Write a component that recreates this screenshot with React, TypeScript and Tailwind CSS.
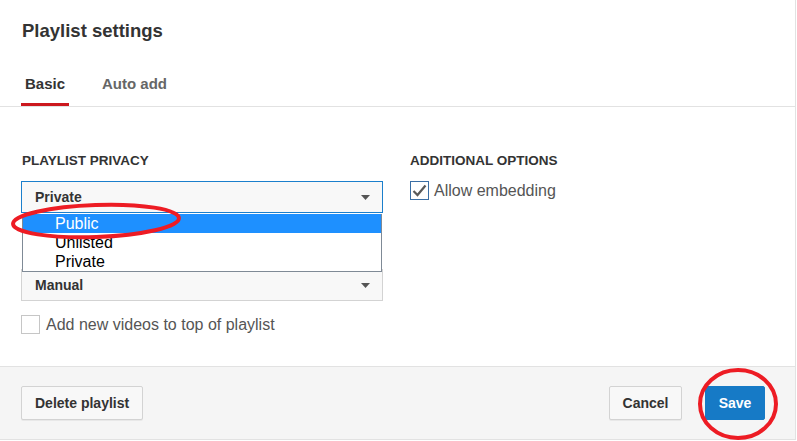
import React from "react";

function Arrow() {
  return (
    <svg width="9" height="5" viewBox="0 0 9 5" className="shrink-0">
      <path d="M0 0h9L4.5 5z" fill="#555555" />
    </svg>
  );
}

function SelectBox({ value, focused }: { value: string; focused?: boolean }) {
  return (
    <div
      className={`flex h-[32px] items-center justify-between bg-[#f8f8f8] pl-[13px] pr-[12px] text-[14px] font-bold text-[#333] ${
        focused ? "border border-[#1b7fcc]" : "border border-[#d3d3d3]"
      }`}
    >
      <span>{value}</span>
      <Arrow />
    </div>
  );
}

function Checkbox({ checked }: { checked?: boolean }) {
  return (
    <div
      className={`flex h-[19px] w-[19px] shrink-0 items-center justify-center bg-white ${
        checked ? "border border-[#3a6ea5]" : "border border-[#c6c6c6]"
      }`}
    >
      {checked && (
        <svg width="15" height="13" viewBox="0 0 15 13">
          <path d="M1.5 7l4 4L13.5 1.5" fill="none" stroke="#5a5a5a" strokeWidth="2.2" />
        </svg>
      )}
    </div>
  );
}

export default function App() {
  return (
    <div
      className="relative h-[441px] w-[797px] overflow-hidden bg-white"
      style={{ fontFamily: '"Liberation Sans", Arial, sans-serif' }}
    >
      <div className="flex h-[440px] w-[796px] flex-col border-r border-[#e2e2e2]">
        {/* header */}
        <div className="border-b border-[#e2e2e2]">
          <h1 className="px-[22px] pt-[20px] text-[18.5px] font-bold leading-[22px] text-[#333]">
            Playlist settings
          </h1>
          <div className="mt-[33px] flex gap-[29px] pl-[21px]">
            <div className="border-b-[3px] border-[#cc181e] px-[4px] pb-[10px] text-[15px] font-bold leading-[18px] text-[#333]">
              Basic
            </div>
            <div className="px-[4px] pb-[10px] text-[15px] font-bold leading-[18px] text-[#666]">
              Auto add
            </div>
          </div>
        </div>

        {/* body */}
        <div className="flex flex-1 gap-[27px] pl-[21px] pt-[46px]">
          <div className="relative w-[362px]">
            <div className="pl-[1px] text-[13.5px] font-bold leading-[16px] text-[#333]">
              PLAYLIST PRIVACY
            </div>
            <div className="mt-[12px]">
              <SelectBox value="Private" focused />
            </div>
            {/* ordering label sits under the open list */}
            <div className="mt-[21px] h-[16px]" />
            <div className="mt-[19px]">
              <SelectBox value="Manual" />
            </div>
            <div className="mt-[14px] flex items-center gap-[6px]">
              <Checkbox />
              <span className="text-[16px] leading-[19px] text-[#555]">
                Add new videos to top of playlist
              </span>
            </div>

            {/* open dropdown list */}
            <div className="absolute left-[1px] top-[61px] w-[360px] border border-t-0 border-[#7f8a96] bg-white text-[16px] leading-[19px] text-black">
              <div className="bg-[#1e90ff] pl-[32px] text-white">Public</div>
              <div className="pl-[32px]">Unlisted</div>
              <div className="pl-[32px]">Private</div>
            </div>
          </div>

          <div>
            <div className="text-[13.5px] font-bold leading-[16px] text-[#333]">
              ADDITIONAL OPTIONS
            </div>
            <div className="mt-[12px] flex items-center gap-[5px]">
              <Checkbox checked />
              <span className="text-[16px] leading-[19px] text-[#555]">Allow embedding</span>
            </div>
          </div>
        </div>

        {/* footer */}
        <div className="flex h-[74px] items-center justify-between border-y border-[#e2e2e2] bg-[#f5f5f5] px-[21px]">
          <button className="h-[34px] rounded-[2px] border border-[#d3d3d3] bg-[#f8f8f8] px-[13px] text-[14px] font-bold text-[#333] shadow-[0_1px_0_rgba(0,0,0,0.05)]">
            Delete playlist
          </button>
          <div className="flex gap-[23px] pr-[9px]">
            <button className="h-[34px] w-[73px] rounded-[2px] border border-[#d3d3d3] bg-[#f8f8f8] text-[14px] font-bold text-[#333] shadow-[0_1px_0_rgba(0,0,0,0.05)]">
              Cancel
            </button>
            <button className="h-[34px] w-[60px] rounded-[2px] border border-[#167ac6] bg-[#167ac6] text-[14px] font-bold text-white">
              Save
            </button>
          </div>
        </div>
      </div>

      {/* red annotation ellipses */}
      <svg className="pointer-events-none absolute left-0 top-0" width="797" height="441">
        <ellipse
          cx="96"
          cy="221"
          rx="83"
          ry="16"
          transform="rotate(-2 96 221)"
          fill="none"
          stroke="#ed1c24"
          strokeWidth="4"
        />
        <ellipse cx="738" cy="404" rx="38" ry="34" fill="none" stroke="#ed1c24" strokeWidth="4" />
      </svg>
    </div>
  );
}
